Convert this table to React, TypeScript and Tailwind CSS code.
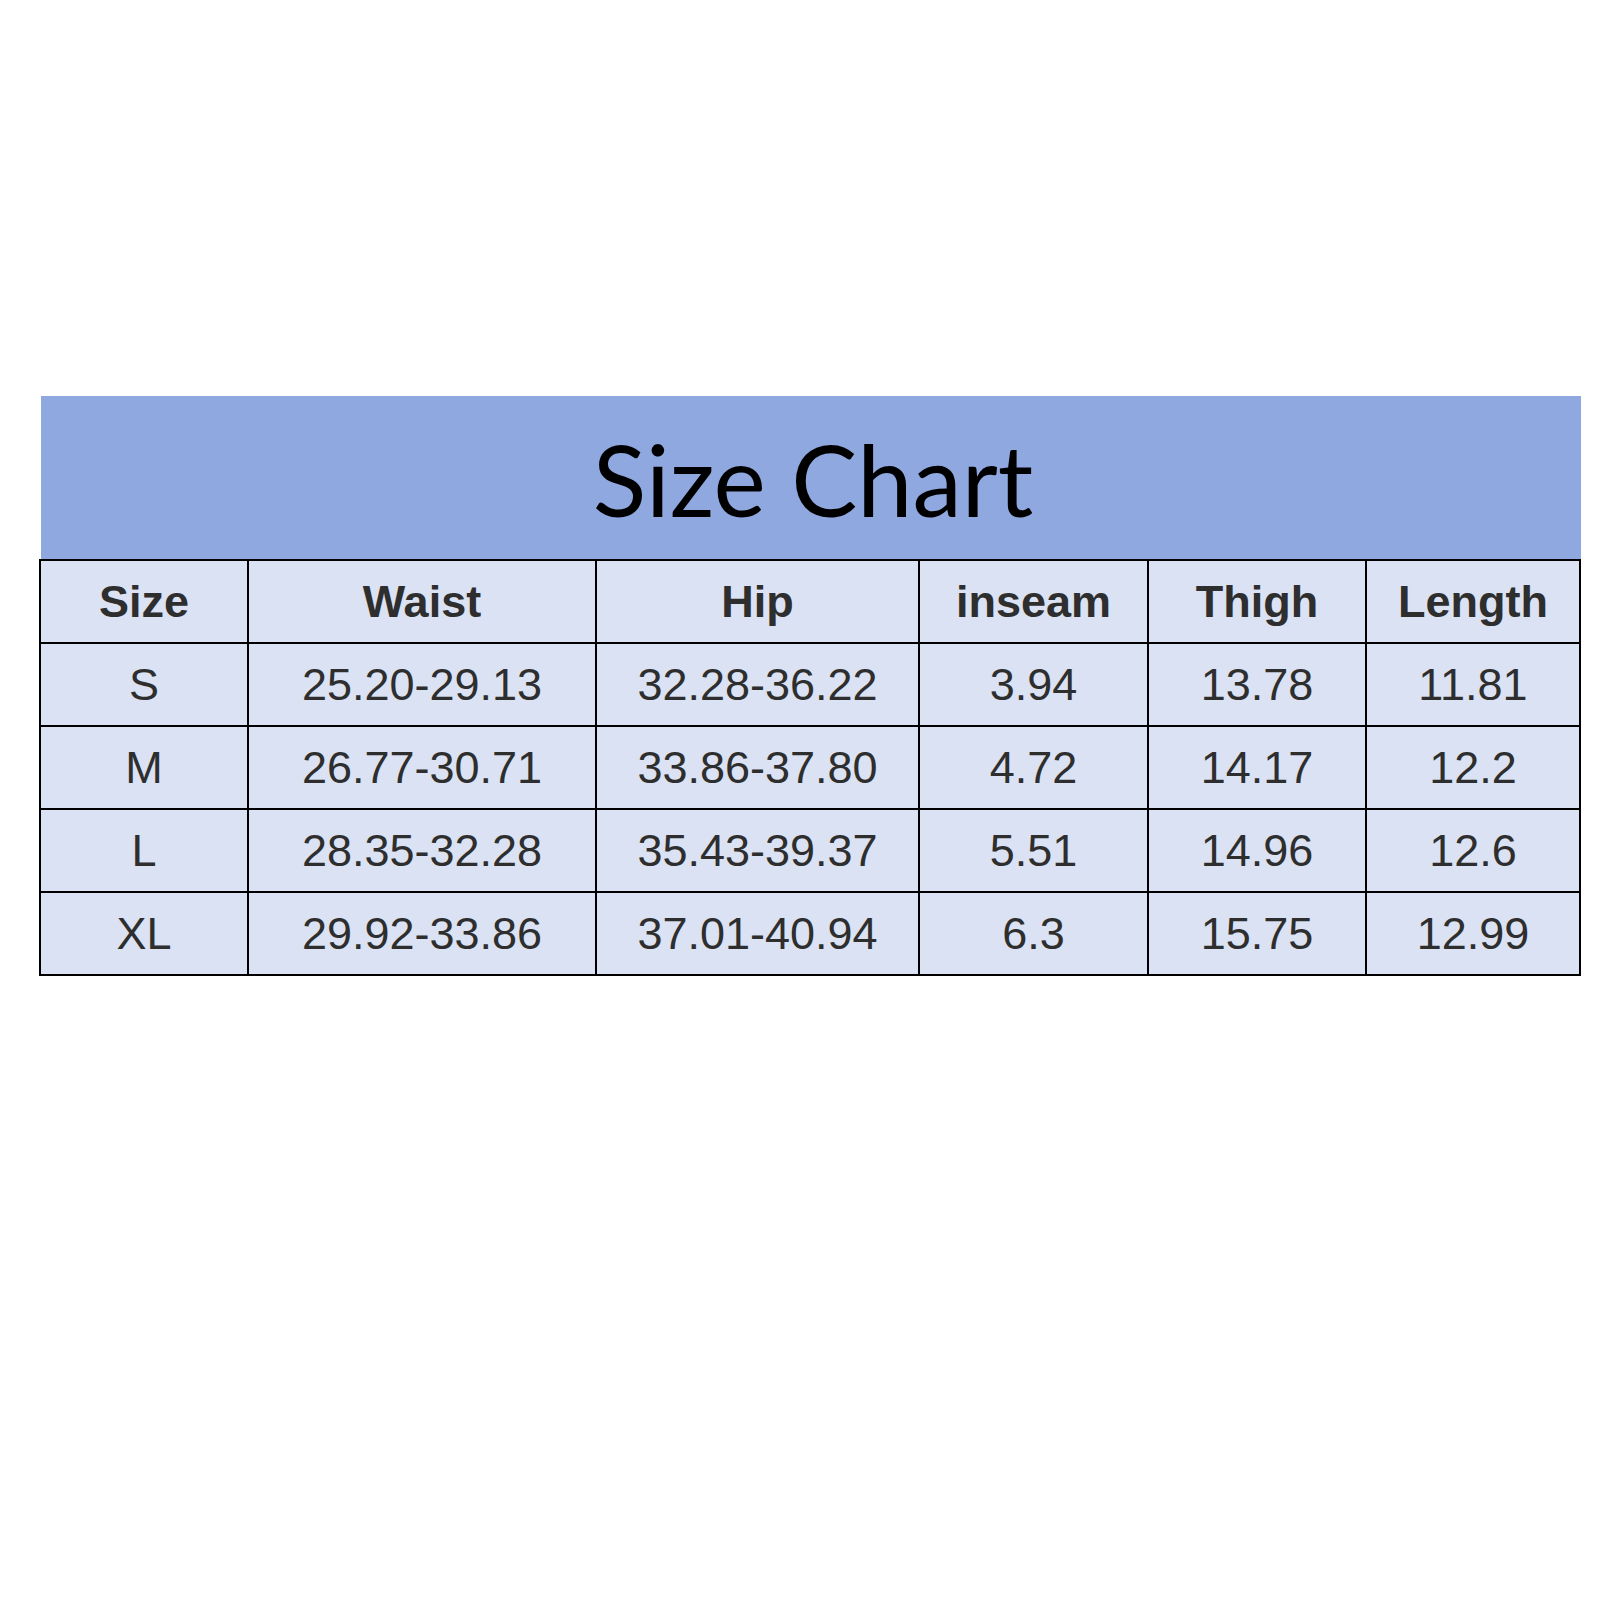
const headers = ["Size", "Waist", "Hip", "inseam", "Thigh", "Length"];

const rows = [
  ["S", "25.20-29.13", "32.28-36.22", "3.94", "13.78", "11.81"],
  ["M", "26.77-30.71", "33.86-37.80", "4.72", "14.17", "12.2"],
  ["L", "28.35-32.28", "35.43-39.37", "5.51", "14.96", "12.6"],
  ["XL", "29.92-33.86", "37.01-40.94", "6.3", "15.75", "12.99"],
];

export default function App() {
  return (
    <div className="w-[1600px] h-[1600px] bg-white pt-[396px] pl-[39px]">
      {/* blue title band */}
      <div className="ml-[2px] w-[1540px] h-[163px] bg-[#8fa8e0] flex items-center justify-center">
        <h1 className="font-['Lato',sans-serif] text-[99px] leading-none text-black pt-[2px] ml-[4px]">
          Size Chart
        </h1>
      </div>

      {/* table: black background shows through the gaps as grid lines */}
      <div className="w-[1542px] grid grid-cols-[206px_346px_321px_227px_216px_212px] auto-rows-[81px] gap-[2px] p-[2px] bg-black font-['Liberation_Sans',Arial,sans-serif] text-[45px] text-[#2e2e2e]">
        {headers.map((h) => (
          <div key={h} className="bg-[#dae2f3] flex items-center justify-center font-bold">
            {h}
          </div>
        ))}
        {rows.map((r) =>
          r.map((c, i) => (
            <div key={r[0] + i} className="bg-[#dae2f3] flex items-center justify-center">
              {c}
            </div>
          ))
        )}
      </div>
    </div>
  );
}
